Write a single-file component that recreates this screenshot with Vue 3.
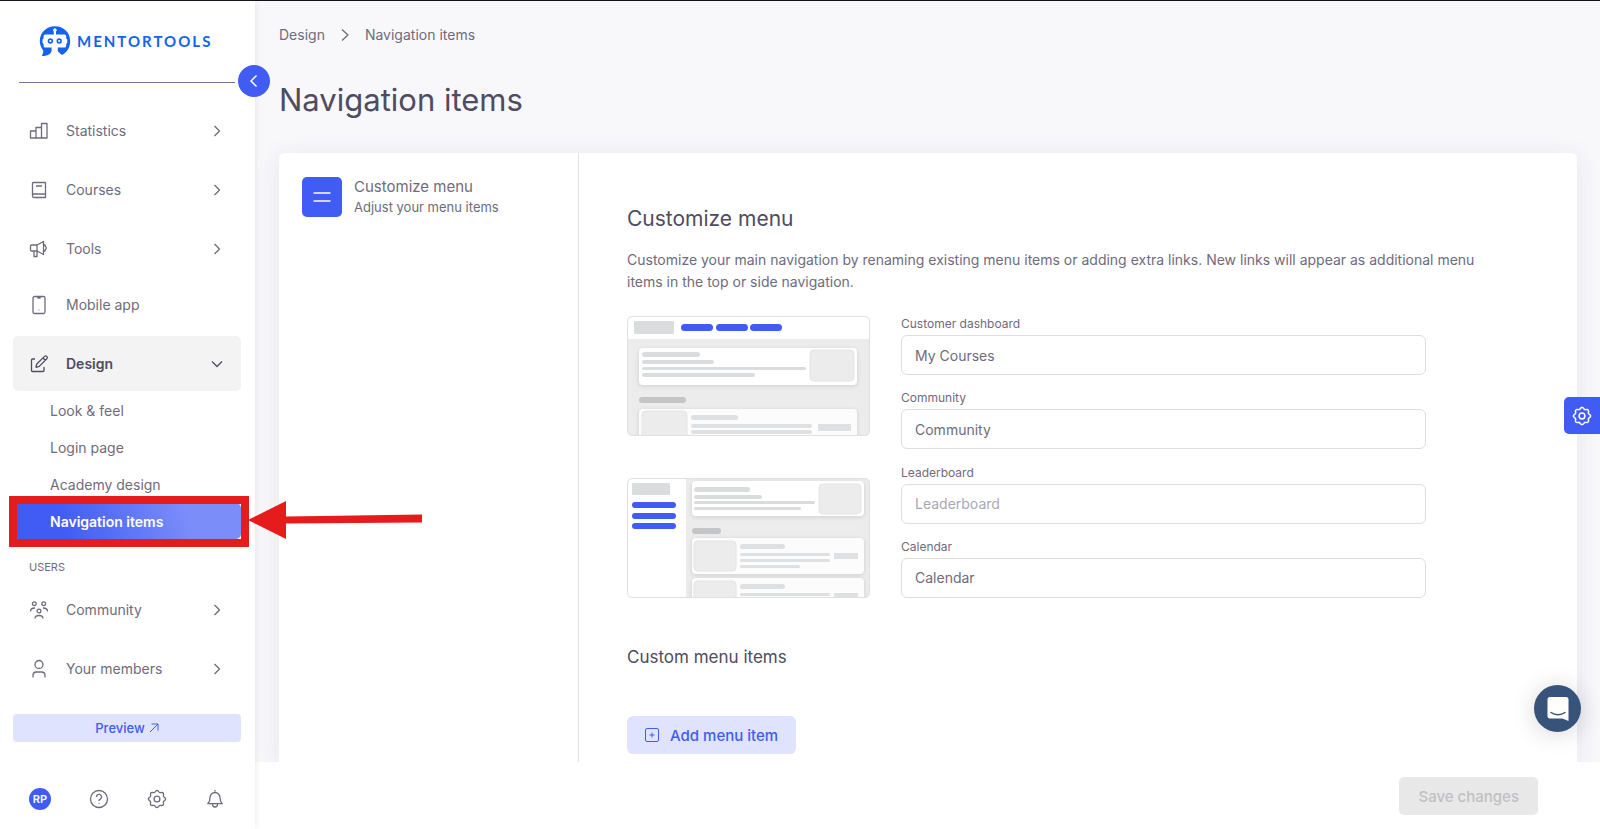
<template>
  <div class="app">
    <aside class="sidebar">
      <a class="logo" href="#" aria-label="Mentortools">
        <svg class="logo-mark" width="32" height="32" viewBox="0 0 32 32">
          <path
            fill="#1463ee"
            d="M3 31 C3.4 29 4.6 27 4.2 25.4 C2 22.6 .8 19.5 .8 16 C.8 7.4 7.5 1.2 16 1.2 S31.2 7.4 31.2 16 C31.2 22.5 28 27.5 22.8 30 L18.8 26.2 V22.6 H25.4 C26.6 22.6 27.2 22 27.2 20.8 V19 L28.3 17.8 V14.6 L27.2 13.4 V11.6 C27.2 10.4 26.6 9.6 25.4 9.6 H17 V6.6 A1.8 1.8 0 1 0 14.8 6.6 V9.6 H6.4 C5.2 9.6 4.6 10.4 4.6 11.6 V13.4 L3.5 14.6 V17.8 L4.6 19 V20.8 C4.6 22 5.2 22.6 6.4 22.6 H12.6 V26 C11.4 29.6 8.4 31 3 31 Z"
          />
          <circle cx="11.4" cy="16" r="1.9" fill="none" stroke="#1463ee" stroke-width="1.6" />
          <circle cx="20.2" cy="16" r="1.9" fill="none" stroke="#1463ee" stroke-width="1.6" />
        </svg>
        <span class="logo-name">MENTORTOOLS</span>
      </a>
      <div class="rule"></div>
      <button class="collapse" type="button" aria-label="Collapse menu">
        <svg width="16" height="16" viewBox="0 0 16 16"><path d="M10.5 2.5 5 8l5.500 5.500" /></svg>
      </button>

      <nav class="menu">
        <template v-for="item in mainItems" :key="item.label">
          <a class="item" :class="{ open: item.children, flat: item.flat }" href="#">
            <svg class="icon" width="20" height="20" viewBox="0 0 20 20"><path :d="item.icon" /></svg>
            <span class="label">{{ item.label }}</span>
            <svg v-if="!item.flat" class="chevron" width="16" height="16" viewBox="0 0 16 16">
              <path :d="item.children ? 'M3 5.5 8 10.5l5-5' : 'M5.5 3 10.5 8l-5 5'" />
            </svg>
          </a>
          <ul v-if="item.children" class="submenu">
            <li v-for="child in item.children" :key="child" :class="{ active: child === current }">
              <a href="#">{{ child }}</a>
              <template v-if="child === current">
                <span class="highlight"></span>
                <svg class="arrow" width="174" height="40" viewBox="0 0 174 40">
                  <path d="M0 20 38 1v15.5l136-2v8l-136 1V39z" />
                </svg>
              </template>
            </li>
          </ul>
        </template>

        <h2 class="group">USERS</h2>
        <a v-for="item in userItems" :key="item.label" class="item" href="#">
          <svg class="icon" width="20" height="20" viewBox="0 0 20 20"><path :d="item.icon" /></svg>
          <span class="label">{{ item.label }}</span>
          <svg class="chevron" width="16" height="16" viewBox="0 0 16 16">
            <path d="M5.5 3 10.5 8l-5 5" />
          </svg>
        </a>
      </nav>

      <a class="preview" href="#">
        Preview
        <svg width="10" height="10" viewBox="0 0 10 10"><path d="M1 9 9 1M2.5 1H9v6.5" /></svg>
      </a>

      <div class="tools">
        <button class="avatar" type="button">RP</button>
        <button type="button" aria-label="Help">
          <svg width="20" height="20" viewBox="0 0 20 20">
            <circle cx="10" cy="10" r="8.500" />
            <path d="M7.5 8a2.5 2.5 0 1 1 3.7 2.1c-.8.5-1.2.9-1.2 1.9M10 14.200v.8" />
          </svg>
        </button>
        <button type="button" aria-label="Settings">
          <svg width="20" height="20" viewBox="0 0 20 20">
            <path :d="gear" />
            <circle cx="10" cy="10" r="2.9" />
          </svg>
        </button>
        <button type="button" aria-label="Notifications">
          <svg width="20" height="20" viewBox="0 0 20 20">
            <path d="M10 1v1.500M3 14.500c1.500-1.800 2-3 2-6a5 5 0 0 1 10 0c0 3 .5 4.200 2 6M2.200 14.700h15.600M7.500 15a2.500 3 0 0 0 5 0" />
          </svg>
        </button>
      </div>
    </aside>

    <main class="main">
      <div class="content">
        <nav class="breadcrumb">
          <a href="#">Design</a>
          <svg width="16" height="16" viewBox="0 0 16 16"><path d="M5 2.5 11 8l-6 5.5" /></svg>
          <span>Navigation items</span>
        </nav>
        <h1>Navigation items</h1>

        <div class="card">
          <div class="tabs">
            <a class="tab" href="#">
              <span class="tab-icon">
                <svg width="20" height="20" viewBox="0 0 20 20"><path d="M1.5 6h17M1.5 14h17" /></svg>
              </span>
              <span class="tab-text">
                <span class="tab-title">Customize menu</span>
                <span class="tab-hint">Adjust your menu items</span>
              </span>
            </a>
          </div>

          <section class="panel">
            <h2>Customize menu</h2>
            <p>
              Customize your main navigation by renaming existing menu items or adding extra links. New links will
              appear as additional menu items in the top or side navigation.
            </p>

            <div class="form">
              <div class="layouts">
                <!-- top navigation -->
                <svg width="243" height="120" viewBox="0 0 243 120">
                  <defs><clipPath id="frame"><rect width="243" height="120" rx="5" /></clipPath></defs>
                  <g clip-path="url(#frame)">
                    <rect width="243" height="120" fill="#ececed" />
                    <rect width="243" height="23" fill="#fff" />
                    <rect x="7" y="5" width="40" height="13" rx="1" fill="#dbdcde" />
                    <rect v-for="x in [54, 89, 123]" :key="x" :x="x" y="8" width="32" height="7" rx="3.5" fill="#405cf5" />
                    <rect class="sheet" x="12" y="32" width="218" height="37" rx="4" />
                    <g fill="#dbdcde">
                      <rect x="15" y="36" width="58" height="5" rx="2.5" />
                      <rect x="15" y="44" width="72" height="4" rx="2" />
                      <rect x="15" y="51" width="164" height="3" rx="1.5" />
                      <rect x="15" y="57" width="113" height="4" rx="2" />
                    </g>
                    <rect class="thumb" x="183" y="34" width="44" height="31" rx="4" />
                    <rect x="12" y="81" width="47" height="6" rx="3" fill="#c4c5c7" />
                    <rect class="sheet dim" x="12" y="93" width="218" height="37" rx="4" />
                    <rect class="thumb" x="15" y="95" width="45" height="31" rx="4" />
                    <g fill="#dfe0e2">
                      <rect x="64" y="99" width="47" height="5" rx="2.5" />
                      <rect x="64" y="108" width="121" height="4" rx="2" />
                      <rect x="64" y="114" width="121" height="4" rx="2" />
                      <rect x="191" y="108" width="33" height="7" />
                    </g>
                  </g>
                  <rect class="frame" x=".5" y=".5" width="242" height="119" rx="5" />
                </svg>

                <!-- side navigation -->
                <svg width="243" height="120" viewBox="0 0 243 120">
                  <g clip-path="url(#frame)">
                    <rect width="243" height="120" fill="#ececed" />
                    <rect width="59" height="120" fill="#fff" />
                    <rect x="5" y="5" width="38" height="12" rx="1" fill="#dbdcde" />
                    <rect v-for="y in [24, 35, 45]" :key="y" x="5" :y="y" width="44" height="6" rx="3" fill="#405cf5" />
                    <rect class="sheet" x="65" y="3" width="172" height="35" rx="4" />
                    <g fill="#dbdcde">
                      <rect x="67" y="9" width="56" height="5" rx="2.5" />
                      <rect x="67" y="17" width="68" height="4" rx="2" />
                      <rect x="67" y="23" width="121" height="3" rx="1.5" />
                      <rect x="67" y="29" width="107" height="3" rx="1.5" />
                    </g>
                    <rect class="thumb" x="192" y="6" width="42" height="30" rx="4" />
                    <rect x="65" y="50" width="29" height="6" rx="3" fill="#c4c5c7" />
                    <g v-for="y in [60, 100]" :key="y">
                      <rect class="sheet dim" x="65" :y="y" width="172" height="36" rx="4" />
                      <rect class="thumb" x="67" :y="y + 3" width="42" height="30" rx="4" />
                      <g fill="#dfe0e2">
                        <rect x="113" :y="y + 6" width="45" height="5" rx="2.5" />
                        <rect x="113" :y="y + 15" width="90" height="3" rx="1.5" />
                        <rect x="113" :y="y + 21" width="90" height="3" rx="1.5" />
                        <rect x="113" :y="y + 27" width="60" height="3" rx="1.5" />
                        <rect x="207" :y="y + 15" width="24" height="6" />
                      </g>
                    </g>
                  </g>
                  <rect class="frame" x=".5" y=".5" width="242" height="119" rx="5" />
                </svg>
              </div>

              <div class="fields">
                <div v-for="field in fields" :key="field.id" class="field">
                  <label :for="field.id">{{ field.label }}</label>
                  <input :id="field.id" v-model="field.value" type="text" :placeholder="field.label" />
                </div>
              </div>
            </div>

            <h3>Custom menu items</h3>
            <button class="add" type="button">
              <svg width="16" height="16" viewBox="0 0 16 16">
                <rect x="1.5" y="1.5" width="13" height="13" rx="1.5" />
                <path d="M8 5.5v5M5.5 8h5" />
              </svg>
              Add menu item
            </button>
          </section>
        </div>
      </div>

      <footer class="actions">
        <button class="save" type="button" disabled>Save changes</button>
      </footer>
    </main>

    <button class="customizer" type="button" aria-label="Customizer">
      <svg width="20" height="20" viewBox="0 0 20 20">
        <path :d="gear" />
        <circle cx="10" cy="10" r="2.9" />
      </svg>
    </button>
    <button class="chat" type="button" aria-label="Open chat">
      <svg width="24" height="26" viewBox="0 0 24 26">
        <path fill="#fff" d="M4 1h16a2.500 2.500 0 0 1 2.500 2.500V25l-6-2.500H4A2.500 2.500 0 0 1 1.500 20V3.500A2.500 2.500 0 0 1 4 1z" />
        <path fill="none" stroke="#38537a" stroke-width="1.5" stroke-linecap="round" d="M5 16.500c4 3 10 3 14 0" />
      </svg>
    </button>
  </div>
</template>

<script setup>
import { ref, reactive } from 'vue'

const current = ref('Navigation items')

const mainItems = [
  { label: 'Statistics', icon: 'M1.5 10H7v7H1.5zM7 6.5h5.500V17H7zM12.500 2.500H18V17h-5.500z' },
  { label: 'Courses', icon: 'M4 2.5h12.500v15H5A1.500 1.500 0 0 1 3.500 16V3zM3.500 15.500c0-1 .5-1.500 1.500-1.500h11.500M7 6h6' },
  {
    label: 'Tools',
    icon: 'M2.5 6H8v6H2.500a1 1 0 0 1-1-1V7a1 1 0 0 1 1-1zM8 6l6.500-3.500v13L8 12M14.500 5.500c1.500 0 1.800 1 1.800 2 1.500.5 1.500 2.500 0 3 0 1-.3 2-1.800 2M5 12v5.500h3V12'
  },
  {
    label: 'Mobile app',
    flat: true,
    icon: 'M5.500 1.500h9a1.500 1.500 0 0 1 1.500 1.500v14a1.500 1.500 0 0 1-1.500 1.500h-9A1.500 1.500 0 0 1 4 17V3a1.500 1.500 0 0 1 1.500-1.500zM8.500 2l.5 1h2l.5-1M9.700 15h.6'
  },
  {
    label: 'Design',
    icon: 'M6 5H3.500a1 1 0 0 0-1 1v10.500a1 1 0 0 0 1 1H14a1 1 0 0 0 1-1V13M7 13.300l.8-3.300 7.700-7.600a1.500 1.500 0 0 1 2.300 2.300l-7.600 7.700zM14 4l2.300 2.300',
    children: ['Look & feel', 'Login page', 'Academy design', 'Navigation items']
  }
]

const userItems = [
  {
    label: 'Community',
    icon: 'M7.200 3.700a1.900 1.900 0 1 1-3.800 0 1.900 1.900 0 0 1 3.800 0zM16.600 3.700a1.900 1.900 0 1 1-3.800 0 1.900 1.900 0 0 1 3.800 0zM11.900 11a1.900 1.900 0 1 1-3.800 0 1.900 1.900 0 0 1 3.800 0zM1.500 11.500c0-2.500 1.300-3.500 4.500-3.500M18.500 11.500c0-2.500-1.300-3.500-4.500-3.500M6 18.500c0-2 1.500-3 4-3s4 1 4 3'
  },
  {
    label: 'Your members',
    icon: 'M14 5.500a4 4 0 1 1-8 0 4 4 0 0 1 8 0zM4 18.500v-2c0-2 1.300-3.500 3.500-3.500h5c2.200 0 3.500 1.500 3.500 3.500v2'
  }
]

const fields = reactive([
  { id: 'dashboard', label: 'Customer dashboard', value: 'My Courses' },
  { id: 'community', label: 'Community', value: 'Community' },
  { id: 'leaderboard', label: 'Leaderboard', value: '' },
  { id: 'calendar', label: 'Calendar', value: 'Calendar' }
])

// outline of a gear with eight soft teeth
const gear =
  Array.from({ length: 96 }, (_, i) => {
    const angle = (i / 96) * Math.PI * 2
    const r = 7.8 + 0.8 * Math.cos(angle * 8)
    return `${i ? 'L' : 'M'}${(10 + r * Math.cos(angle)).toFixed(2)} ${(10 + r * Math.sin(angle)).toFixed(2)}`
  }).join('') + 'z'
</script>

<style>
body {
  margin: 0;
}
</style>

<style scoped>
.app {
  display: flex;
  height: 100vh;
  box-sizing: border-box;
  border-top: 1px solid #10131a;
  background: #f8f8fb;
  color: #6f6b7d;
  font-family: Inter, sans-serif;
  font-size: 14px;
}

a {
  color: inherit;
  text-decoration: none;
}

button {
  border: none;
  padding: 0;
  background: none;
  color: inherit;
  font: inherit;
  cursor: pointer;
}

svg {
  display: block;
  flex: none;
}

h1,
h2,
h3,
p {
  margin: 0;
  font-weight: 400;
}

/* sidebar */
.sidebar {
  position: relative;
  z-index: 2;
  display: flex;
  flex-direction: column;
  flex: none;
  width: 255px;
  box-sizing: border-box;
  padding: 24px 14px 16px 13px;
  background: #fff;
  box-shadow: 0 0 6px rgba(75, 70, 92, 0.12);
}

.logo {
  display: flex;
  align-items: center;
  gap: 6px;
  padding-left: 26px;
}

.logo-name {
  color: #1463ee;
  font-family: Lato, sans-serif;
  font-size: 15px;
  font-weight: 700;
  letter-spacing: 2px;
}

.rule {
  height: 1px;
  margin: 25px 6px 20px;
  background: #79759a;
}

.collapse {
  position: absolute;
  top: 64px;
  right: -15px;
  display: grid;
  place-items: center;
  width: 32px;
  height: 32px;
  border-radius: 50%;
  background: #405cf5;
}

.collapse path {
  fill: none;
  stroke: #fff;
  stroke-width: 1.5;
}

.item {
  display: flex;
  align-items: center;
  gap: 17px;
  height: 55px;
  margin-bottom: 4px;
  padding: 0 16px;
  border-radius: 5px;
}

.item.flat {
  height: 49px;
  margin-bottom: 7px;
}

.item.open {
  margin-bottom: 0;
  background: #f3f3f4;
  color: #4f4b60;
  font-weight: 600;
}

.label {
  flex: 1;
}

.icon,
.chevron,
.tools svg,
.breadcrumb svg {
  fill: none;
  stroke: currentColor;
  stroke-width: 1.3;
  stroke-linejoin: round;
}

.submenu {
  display: flex;
  flex-direction: column;
  gap: 1px;
  margin: 0;
  padding: 1px 0 0;
  list-style: none;
}

.submenu li {
  position: relative;
}

.submenu a {
  display: flex;
  align-items: center;
  height: 36px;
  padding-left: 37px;
  border-radius: 5px;
}

.active a {
  background: linear-gradient(72deg, #405cf5 22%, #7b8df9 76%);
  color: #fff;
  font-weight: 600;
}

.highlight {
  position: absolute;
  inset: -7px -8px -8px -4px;
  border: 8px solid #e61b1b;
}

.arrow {
  position: absolute;
  top: -3px;
  left: 235px;
  fill: #e61b1b;
}

.group {
  margin: 19px 0 6px;
  padding-left: 16px;
  font-size: 11px;
  line-height: 18px;
}

.preview {
  display: flex;
  align-items: center;
  justify-content: center;
  gap: 4px;
  height: 28px;
  margin-top: 14px;
  border-radius: 4px;
  background: #dfe3fe;
  color: #405cf5;
  font-size: 13px;
  font-weight: 500;
}

.preview path {
  fill: none;
  stroke: currentColor;
}

.tools {
  display: flex;
  align-items: center;
  justify-content: space-between;
  margin-top: auto;
  padding: 0 16px 3px;
}

.tools .avatar {
  width: 22px;
  height: 22px;
  border-radius: 50%;
  background: #405cf5;
  color: #fff;
  font-size: 11px;
  font-weight: 600;
}

/* page */
.main {
  display: flex;
  flex: 1;
  flex-direction: column;
  min-width: 0;
}

.content {
  display: flex;
  flex: 1;
  flex-direction: column;
  min-height: 0;
  padding: 24px 23px 0 24px;
  overflow: hidden auto;
  scrollbar-width: none;
}

.breadcrumb {
  display: flex;
  align-items: center;
  gap: 12px;
  line-height: 20px;
}

h1 {
  margin: 33px 0 32px;
  color: #4f4b60;
  font-size: 31px;
  line-height: 43px;
}

.card {
  display: flex;
  flex: 1 0 auto;
  border-radius: 6px 6px 0 0;
  background: #fff;
  box-shadow: 0 4px 24px rgba(60, 50, 110, 0.1);
}

.tabs {
  flex: none;
  width: 300px;
  box-sizing: border-box;
  padding: 24px 23px;
  border-right: 1px solid #e2e2e5;
}

.tab {
  display: flex;
  align-items: center;
  gap: 12px;
}

.tab-icon {
  display: grid;
  place-items: center;
  width: 40px;
  height: 40px;
  border-radius: 5px;
  background: #405cf5;
}

.tab-icon path {
  stroke: #fff;
  stroke-width: 1.5;
}

.tab-text {
  display: flex;
  flex-direction: column;
  line-height: 20px;
}

.tab-title {
  font-size: 15px;
}

.tab-hint {
  font-size: 13px;
}

.panel {
  flex: 1;
  min-width: 0;
  padding: 52px 72px 7px 48px;
}

.panel h2 {
  color: #4f4b60;
  font-size: 21px;
  line-height: 28px;
}

.panel p {
  margin: 16px 0 23px;
  line-height: 22px;
}

.form {
  display: flex;
  gap: 31px;
}

.layouts {
  display: flex;
  flex: none;
  flex-direction: column;
  gap: 42px;
}

.frame {
  fill: none;
  stroke: #dfe0e2;
}

.sheet {
  fill: #fff;
  filter: drop-shadow(0 1px 2px rgba(0, 0, 0, 0.12));
}

.sheet.dim {
  fill: #fcfcfc;
}

.thumb {
  fill: #ececed;
  stroke: #e3e4e5;
}

.fields {
  display: flex;
  flex: 1;
  flex-direction: column;
  justify-content: space-between;
  max-width: 525px;
}

.field {
  display: flex;
  flex-direction: column;
  gap: 3px;
}

.field label {
  font-size: 12px;
  line-height: 16px;
}

.field input {
  width: 100%;
  height: 40px;
  box-sizing: border-box;
  padding: 0 13px;
  border: 1px solid #dedee1;
  border-radius: 6px;
  background: #fff;
  color: #6f6b7d;
  font: inherit;
}

.field input::placeholder {
  color: #a9a7b5;
}

h3 {
  margin: 46px 0;
  color: #4f4b60;
  font-size: 17px;
  line-height: 26px;
}

.add {
  display: flex;
  align-items: center;
  gap: 10px;
  height: 38px;
  padding: 0 18px 0 17px;
  border-radius: 6px;
  background: #dfe3fe;
  color: #405cf5;
  font-size: 15px;
  font-weight: 500;
}

.add svg {
  fill: none;
  stroke: currentColor;
}

.actions {
  display: flex;
  justify-content: flex-end;
  padding: 15px 62px 14px;
  background: #fff;
}

.save {
  height: 38px;
  padding: 0 19px;
  border-radius: 5px;
  background: #e8e8e8;
  color: #c0c0c3;
  font-size: 15px;
  font-weight: 500;
}

/* floating buttons */
.customizer {
  position: fixed;
  z-index: 3;
  top: 397px;
  right: 0;
  display: grid;
  place-items: center;
  width: 36px;
  height: 37px;
  border-radius: 5px 0 0 5px;
  background: #405cf5;
}

.customizer svg {
  fill: none;
  stroke: #fff;
  stroke-width: 1.5;
}

.chat {
  position: fixed;
  z-index: 3;
  right: 19px;
  bottom: 97px;
  display: grid;
  place-items: center;
  width: 47px;
  height: 47px;
  border-radius: 50%;
  background: #38537a;
  box-shadow: 0 2px 24px rgba(0, 0, 0, 0.16);
}
</style>
